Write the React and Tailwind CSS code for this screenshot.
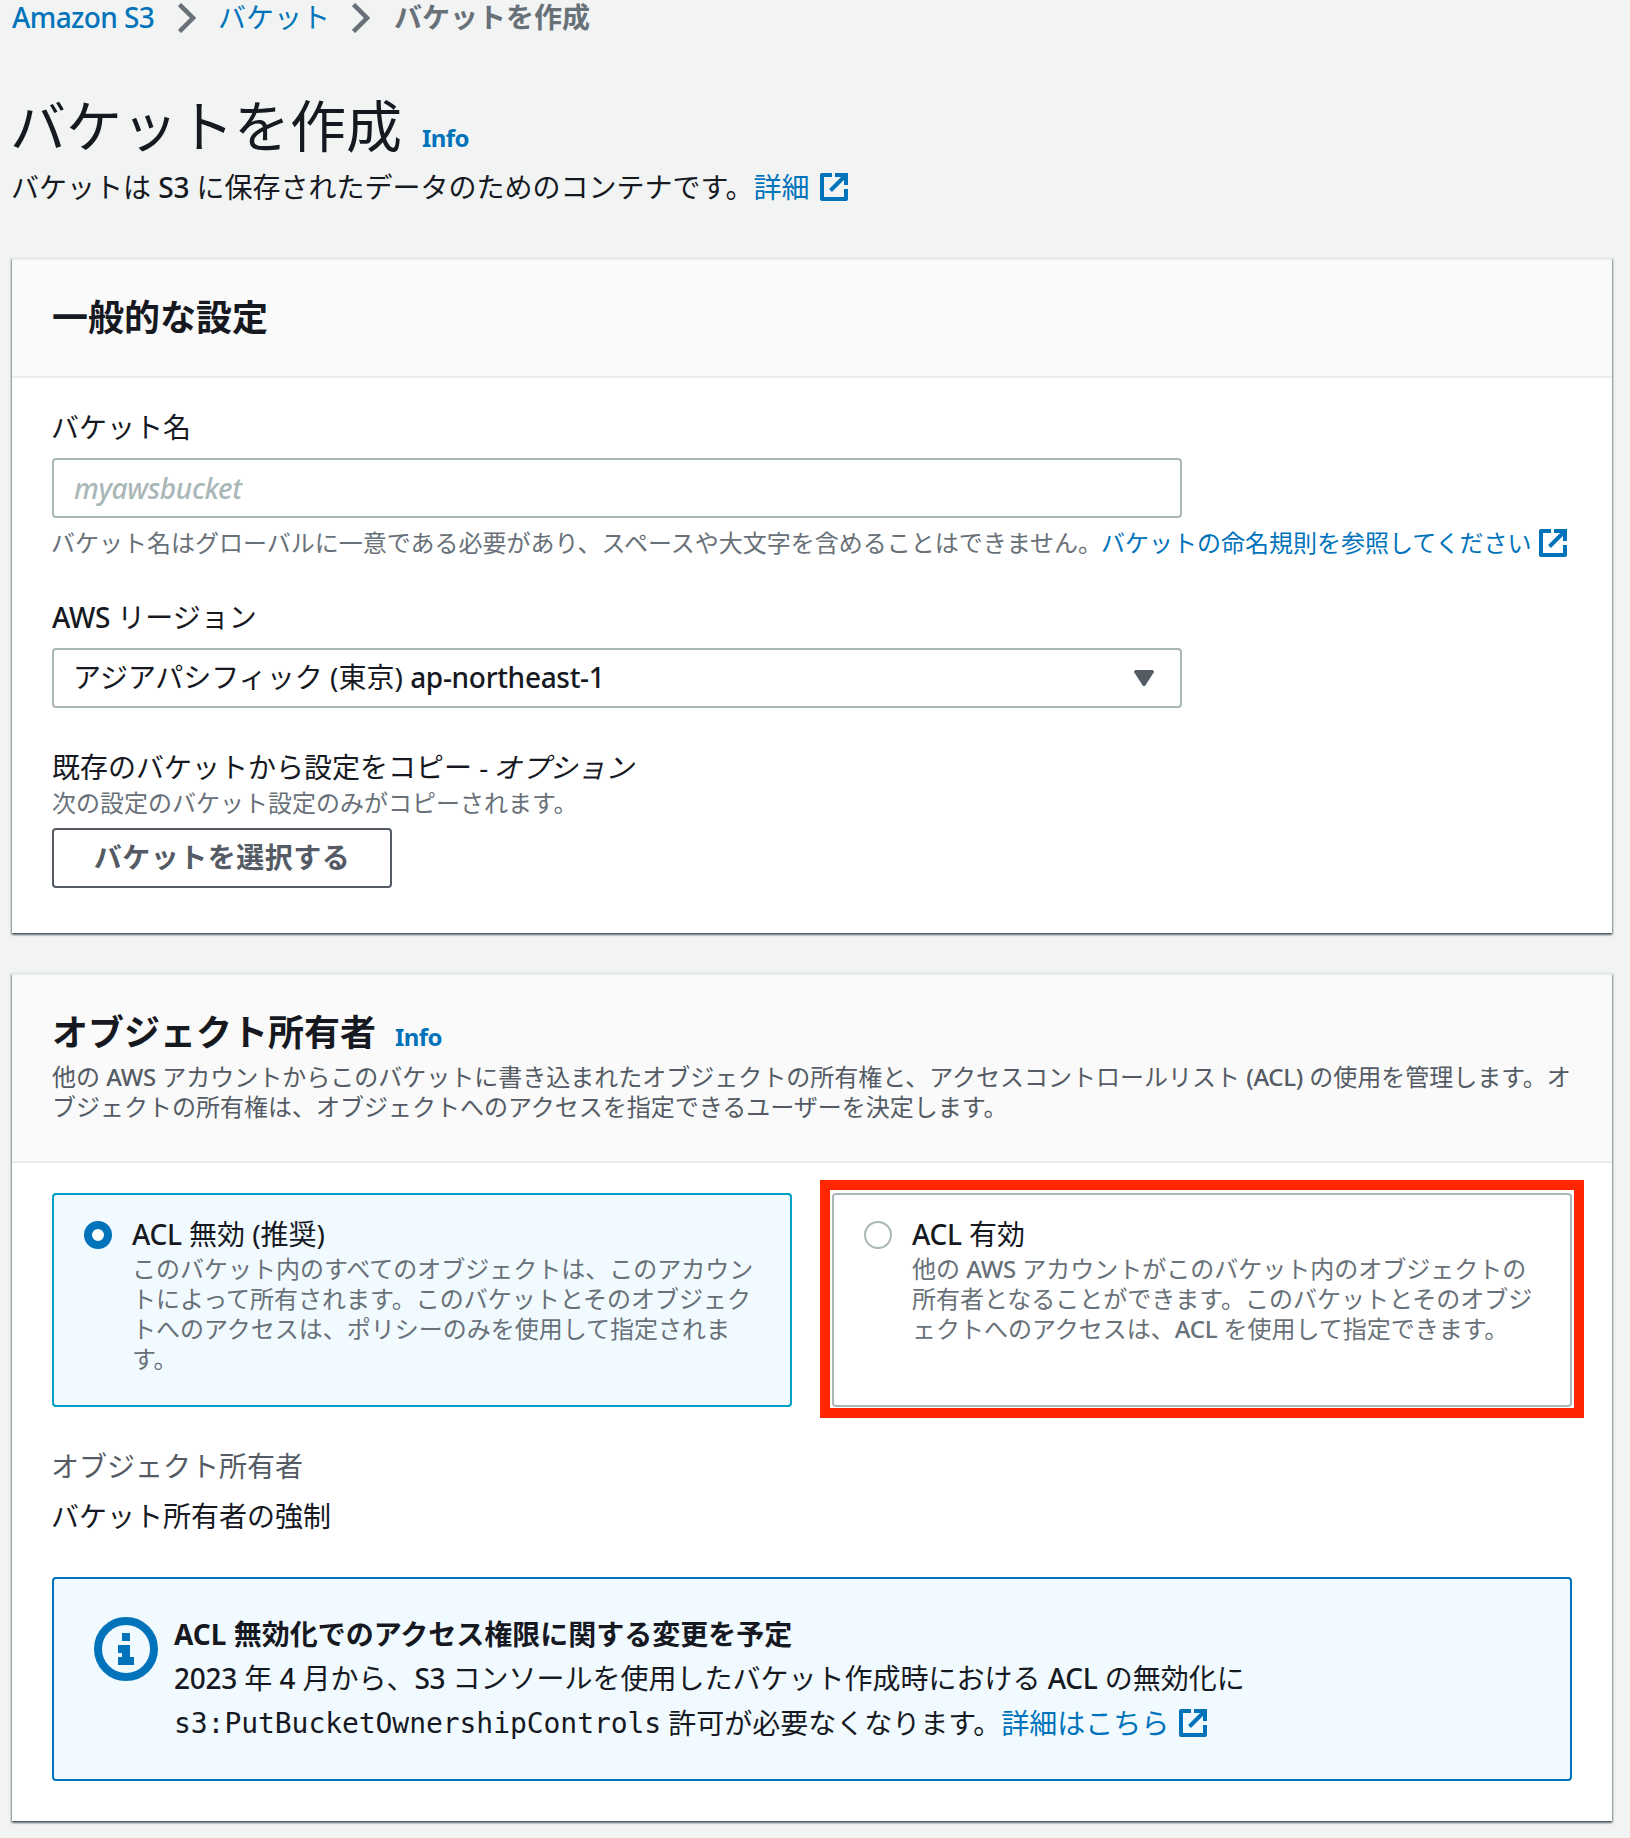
import React, { useState } from "react";

const ExternalIcon = ({ className = "" }) => (
  <svg viewBox="0 0 28 28" className={`inline-block h-7 w-7 shrink-0 ${className}`} fill="none" stroke="currentColor" strokeWidth="4">
    <path d="M12 2H2v24h24V16" strokeLinejoin="round" />
    <path d="M15 2h11v10M25 3 10.5 17.5" />
  </svg>
);

const Chevron = () => (
  <svg viewBox="0 0 18 30" className="h-[30px] w-[18px] shrink-0" fill="none" stroke="#687078" strokeWidth="4.5">
    <path d="M1.5 1.5 15 15 1.5 28.5" />
  </svg>
);

const InfoIcon = () => (
  <svg viewBox="0 0 64 64" className="h-16 w-16 shrink-0 text-[#0073bb]" fill="none">
    <circle cx="32" cy="32" r="28" stroke="currentColor" strokeWidth="8" />
    <path d="M28 16h8v8h-8zM24 28h12v12h4v8H24v-8h4v-4h-4z" fill="currentColor" />
  </svg>
);

// Latin words sit a little heavier and tighter than the Japanese around them
const En = ({ children }) => <span className="font-medium tracking-[-0.3px]">{children}</span>;

const Panel = ({ title, info, description, children }) => (
  <section className="border-t-2 border-[#eaeded] bg-white shadow-[0_2px_2px_0_rgba(0,28,36,0.5),1px_1px_2px_0_rgba(0,28,36,0.3),-1px_1px_2px_0_rgba(0,28,36,0.3)]">
    <div className="border-b-2 border-[#eaeded] bg-[#fafafa] px-10 py-9">
      <h2 className="flex items-baseline text-[36px] leading-[44px] font-bold">
        {title}
        {info && <a className="ml-[19px] text-[24px] leading-[30px] tracking-[-0.6px] text-[#0073bb]">Info</a>}
      </h2>
      {description && <p className="mt-[7px] mb-[3px] text-[24px] leading-[30px] text-[#545b64]">{description}</p>}
    </div>
    {children}
  </section>
);

const options = [
  {
    id: "disabled",
    title: <><En>ACL</En> 無効 (推奨)</>,
    lines: [
      "このバケット内のすべてのオブジェクトは、このアカウン",
      "トによって所有されます。このバケットとそのオブジェク",
      "トへのアクセスは、ポリシーのみを使用して指定されま",
      "す。",
    ],
  },
  {
    id: "enabled",
    title: <><En>ACL</En> 有効</>,
    lines: [
      <>他の <En>AWS</En> アカウントがこのバケット内のオブジェクトの</>,
      "所有者となることができます。このバケットとそのオブジ",
      <>ェクトへのアクセスは、<En>ACL</En> を使用して指定できます。</>,
    ],
  },
];

const AclOption = ({ option, selected, onSelect }) => (
  <div
    onClick={onSelect}
    className={`flex h-[214px] w-[740px] rounded-sm border-2 px-[30px] pt-[19px] ${
      selected ? "border-[#00a1c9] bg-[#f1faff]" : "border-[#aab7b8] bg-white"
    }`}
  >
    <span
      className={`mt-[7px] h-7 w-7 shrink-0 rounded-full bg-white ${
        selected ? "border-[8px] border-[#0073bb]" : "border-2 border-[#aab7b8]"
      }`}
    />
    <div className="ml-5 whitespace-nowrap">
      <div className="text-[28px] leading-[40px]">{option.title}</div>
      {option.lines.map((line, i) => (
        <div key={i} className="text-[24px] leading-[30px] text-[#687078]">
          {line}
        </div>
      ))}
    </div>
  </div>
);

const App = () => {
  const [acl, setAcl] = useState("disabled");
  const [bucketName, setBucketName] = useState("");

  return (
    <div
      lang="ja"
      className="h-[1838px] w-[1630px] overflow-hidden bg-[#f2f3f3] px-3 font-['Noto_Sans','Noto_Sans_CJK_JP',sans-serif] text-[28px] leading-[44px] whitespace-nowrap text-[#16191f]"
    >
      <nav className="flex h-9 items-center leading-[32px] text-[#0073bb]">
        <a className="-mt-[2px] w-[166px] font-medium tracking-[-0.6px]">Amazon S3</a>
        <Chevron />
        <a className="-mt-[2px] ml-[22px] w-[134px]">バケット</a>
        <Chevron />
        <span className="-mt-[2px] ml-6 font-bold text-[#687078]">バケットを作成</span>
      </nav>

      <header className="mt-[53px] h-[169px]">
        <h1 className="-ml-[2px] flex items-baseline text-[56px] leading-[72px]">
          バケットを作成
          <a className="ml-5 text-[24px] font-bold tracking-[-0.6px] text-[#0073bb]">Info</a>
        </h1>
        <p className="-mt-[9px] flex items-center">
          <span className="-ml-px">
            バケットは <En>S3</En> に保存されたデータのためのコンテナです。
          </span>
          <a className="flex items-center text-[#0073bb]">
            詳細
            <ExternalIcon className="ml-[10px]" />
          </a>
        </p>
      </header>

      <div className="flex w-[1600px] flex-col gap-10">
        <Panel title="一般的な設定">
          <div className="h-[555px] px-10 pt-[27px]">
            <label className="-ml-px block">バケット名</label>
            <input
              value={bucketName}
              onChange={(e) => setBucketName(e.target.value)}
              placeholder="myawsbucket"
              className="mt-[9px] block h-[60px] w-[1130px] rounded-sm border-2 border-[#aab7b8] px-5 font-medium tracking-[-0.35px] placeholder:text-[#aab7b8] placeholder:italic"
            />
            <p className="mt-[10px] -ml-px flex h-[30px] items-center text-[24px] leading-[30px] text-[#687078]">
              バケット名はグローバルに一意である必要があり、スペースや大文字を含めることはできません。
              <a className="-ml-px flex items-center text-[#0073bb]">
                バケットの命名規則を参照してください
                <ExternalIcon className="ml-[7px]" />
              </a>
            </p>

            <label className="mt-[37px] block">
              <En>AWS</En> リージョン
            </label>
            <div className="mt-[9px] flex h-[60px] w-[1130px] items-center justify-between rounded-sm border-2 border-[#aab7b8] pr-[26px] pl-5">
              <span className="-mt-[2px] -ml-px">
                アジアパシフィック (東京) <En>ap-northeast-1</En>
              </span>
              <svg viewBox="0 0 20 16" className="h-4 w-5 fill-[#545b64]">
                <path d="M1 0h18l1 2-9 14H9L0 2z" />
              </svg>
            </div>

            <div className="mt-[37px]">
              既存のバケットから設定をコピー - <i className="-ml-[2px]">オプション</i>
            </div>
            <p className="-mt-px text-[24px] leading-[30px] text-[#687078]">次の設定のバケット設定のみがコピーされます。</p>
            <button className="mt-[10px] flex h-[60px] w-[340px] items-center justify-center rounded-sm border-2 border-[#545b64] pb-[2px] font-bold tracking-[0.5px] text-[#545b64]">
              バケットを選択する
            </button>
          </div>
        </Panel>

        <Panel
          title="オブジェクト所有者"
          info
          description={
            <>
              他の <En>AWS</En> アカウントからこのバケットに書き込まれたオブジェクトの所有権と、アクセスコントロールリスト <En>(ACL)</En> の使用を管理します。オ
              <br />
              ブジェクトの所有権は、オブジェクトへのアクセスを指定できるユーザーを決定します。
            </>
          }
        >
          <div className="h-[658px] px-10 pt-[30px]">
            <div className="flex gap-10">
              <AclOption option={options[0]} selected={acl === "disabled"} onSelect={() => setAcl("disabled")} />
              <div className="-mt-px h-[214px] pt-px outline-[10px] outline-offset-[2px] outline-[#ff2600]">
                <AclOption option={options[1]} selected={acl === "enabled"} onSelect={() => setAcl("enabled")} />
              </div>
            </div>

            <div className="mt-[37px] -ml-px text-[#545b64]">オブジェクト所有者</div>
            <div className="mt-[6px] -ml-px">バケット所有者の強制</div>

            <div className="mt-[39px] flex h-[204px] w-[1520px] rounded-sm border-2 border-[#0073bb] bg-[#f1faff] pt-[33px] pl-10">
              <div className="mt-[5px]">
                <InfoIcon />
              </div>
              <div className="ml-4">
                <div className="font-bold">ACL 無効化でのアクセス権限に関する変更を予定</div>
                <div>
                  <En>2023</En> 年 <En>4</En> 月から、<En>S3</En> コンソールを使用したバケット作成時における <En>ACL</En> の無効化に
                </div>
                <div className="flex items-center">
                  <code className="mt-[2px] mr-[7px] font-['DejaVu_Sans_Mono',monospace] tracking-[-0.06px]">s3:PutBucketOwnershipControls</code>
                  許可が必要なくなります。
                  <a className="flex items-center text-[#0073bb]">
                    詳細はこちら
                    <ExternalIcon className="ml-[10px]" />
                  </a>
                </div>
              </div>
            </div>
          </div>
        </Panel>
      </div>
    </div>
  );
};

export default App;
